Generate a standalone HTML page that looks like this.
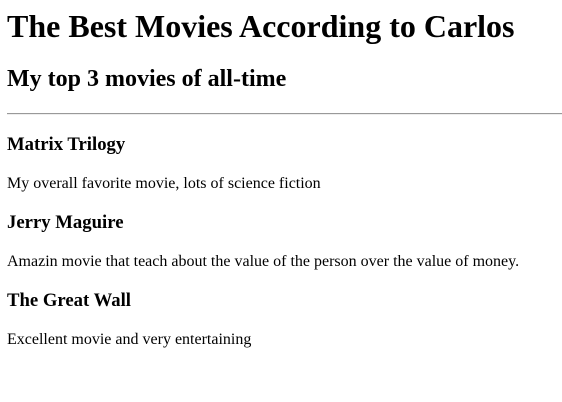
<!DOCTYPE html>
<html><head><style>
html,body{overflow:hidden}
body{margin:-13px 0 0 7px;font-family:"Liberation Serif",serif;font-size:16px;color:#000;background:#fff;width:555px;height:402px}
h1{font-size:32px;margin:21px 0}
h2{font-size:24px;margin:20px 0}
h3{font-size:18.72px;margin:19px 0}
p{margin:16px 0}
hr{margin:8px 0;height:0;border:0;border-top:1px solid #999;border-bottom:1px solid #eee}
</style></head><body>
<h1>The Best Movies According to Carlos</h1>
<h2>My top 3 movies of all-time</h2>
<hr>
<h3>Matrix Trilogy</h3>
<p>My overall favorite movie, lots of science fiction</p>
<h3>Jerry Maguire</h3>
<p>Amazin movie that teach about the value of the person over the value of money.</p>
<h3>The Great Wall</h3>
<p>Excellent movie and very entertaining</p>
</body></html>
